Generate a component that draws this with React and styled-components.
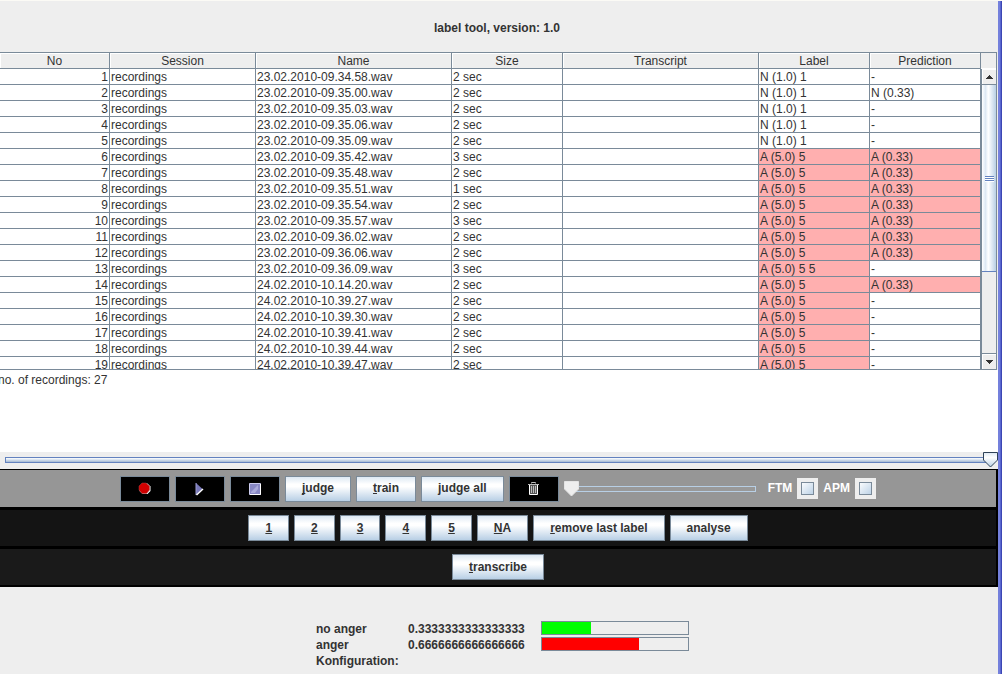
import React, { useState } from "react";
import styled, { createGlobalStyle } from "styled-components";

const Global = createGlobalStyle`
  *, *::before, *::after { box-sizing: border-box; }
  html, body { margin: 0; }
  body {
    background: #eeeeee;
    color: #333333;
    font: 12px/15px "Liberation Sans", Arial, sans-serif;
  }
  u { text-decoration-skip-ink: none; }
`;

const Window = styled.div`
  min-height: 100vh;
  overflow: hidden;
  padding-right: 4px;
  background: linear-gradient(
    to left,
    #3c46b4 0 1px,
    #5a67cf 1px 2px,
    #7480dc 2px 4px,
    #eeeeee 4px
  );
  border-top: 1px solid #fbfaf5;
`;

const Title = styled.h1`
  margin: 0;
  padding: 20px 4px 16px 0;
  height: 51px;
  font-size: 12px;
  line-height: 15px;
  text-align: center;
`;

const ScrollPane = styled.div`
  display: grid;
  grid-template-columns: minmax(0, 1fr) 16px;
  height: 318px;
  margin-right: 1px;
  border-top: 1px solid #7a8a99;
  border-bottom: 1px solid #7a8a99;
  overflow: hidden;
`;

const Viewport = styled.div`
  overflow: hidden;
  background: #ffffff;
`;

const Table = styled.table`
  width: 100%;
  table-layout: fixed;
  border-collapse: separate;
  border-spacing: 0;
`;

const Head = styled.th`
  height: 16px;
  padding: 2px 0 0;
  overflow: hidden;
  background: #eeeeee;
  border-right: 1px solid #7a8a99;
  border-bottom: 1px solid #7a8a99;
  box-shadow: inset 1px 1px #ffffff;
  font-weight: normal;
  line-height: 13px;
`;

const Cell = styled.td`
  height: 16px;
  padding: 2px 1px 0;
  overflow: hidden;
  background: ${(p) => (p.$angry ? "#ffafaf" : "#ffffff")};
  border-right: 1px solid #7a8a99;
  border-bottom: 1px solid #7a8a99;
  line-height: 13px;
  text-align: ${(p) => (p.$numeric ? "right" : "left")};
  white-space: nowrap;
`;

const ScrollColumn = styled.div`
  display: flex;
  flex-direction: column;
  background: #eeeeee;
  border-right: 1px solid #7a8a99;
`;

const Corner = styled.div`
  height: 16px;
  flex: none;
  border-bottom: 1px solid #ffffff;
`;

const ArrowButton = styled.button`
  display: grid;
  place-items: center;
  height: 16px;
  flex: none;
  padding: 0;
  background: #eeeeee;
  border: 0 solid #7a8a99;
  border-width: ${(p) => (p.$down ? "1px 0 0 1px" : "0 0 1px 1px")};
  box-shadow: inset 1px 1px #ffffff;
`;

const Track = styled.div`
  flex: 1;
  background: #eeeeee;
  border-left: 1px solid #7a8a99;
`;

const Thumb = styled.div`
  display: flex;
  flex-direction: column;
  justify-content: center;
  align-items: center;
  gap: 1px;
  height: 187px;
  background: linear-gradient(90deg, #ffffff 0%, #dde8f3 25%, #ffffff 45%, #b8cfe5 100%);
  border: 1px solid #6382bf;
  border-width: 0 0 1px 0;
`;

const Grip = styled.span`
  width: 9px;
  height: 1px;
  background: #6382bf;
  box-shadow: 0 1px #ffffff;
`;

const Notes = styled.div`
  height: 82px;
  padding-top: 3px;
  background: #ffffff;
`;

const NotesLine = styled.p`
  margin: 0 0 0 -2px;
`;

const Position = styled.div`
  height: 17px;
  margin-left: -2px;
`;

const SliderBox = styled.div`
  position: relative;
  display: flex;
  width: ${(p) => (p.$flat ? "199px" : "auto")};
  height: 16px;
`;

const Range = styled.input`
  appearance: none;
  flex: 1;
  min-width: 0;
  height: 16px;
  margin: 0 7px;
  background: transparent;

  &::-webkit-slider-runnable-track {
    height: 6px;
    background: ${(p) =>
      p.$flat ? "#999999" : "linear-gradient(#ffffff, #dbe5f1 40%, #a3b8d2)"};
    border: 1px solid ${(p) => (p.$flat ? "#b8cfe5" : "#6382bf")};
  }

  &::-webkit-slider-thumb {
    appearance: none;
    width: 1px;
    height: 4px;
    background: transparent;
  }
`;

const Knob = styled.svg`
  position: absolute;
  top: 0;
  pointer-events: none;
`;

const Panels = styled.div`
  border: solid #000000;
  border-width: 1px 2px 2px 0;
`;

const Toolbar = styled.div`
  display: flex;
  justify-content: center;
  align-items: center;
  gap: 5px;
  height: ${(p) => p.$height || "39px"};
  background: ${(p) => p.$tone};
  border-bottom: ${(p) => (p.$last ? "0" : "3px solid #000000")};
`;

const Button = styled.button`
  height: 26px;
  padding: 0 16px;
  background: linear-gradient(#dde8f3, #ffffff 30%, #ffffff 40%, #b8cfe5);
  border: 1px solid #7a8a99;
  color: #333333;
  font: bold 12px/15px "Liberation Sans", Arial, sans-serif;
  white-space: nowrap;
`;

const IconButton = styled.button`
  display: grid;
  place-items: center;
  width: 50px;
  height: 26px;
  padding: 0;
  background: #000000;
  border: 1px solid #7a8a99;
`;

const Option = styled.label`
  display: flex;
  align-items: center;
  gap: 5px;
  color: #ffffff;
  font-weight: bold;
`;

const Check = styled.input`
  appearance: none;
  width: 21px;
  height: 21px;
  margin: 0;
  border: 4px solid #eeeeee;
  outline: 1px solid #7a8a99;
  outline-offset: -5px;
  background: linear-gradient(135deg, #ffffff, #b8cfe5);
`;

const Results = styled.dl`
  display: grid;
  grid-template-columns: 87px 128px 148px;
  column-gap: 5px;
  justify-content: center;
  margin: 34px 0 0;
  padding-left: 7px;
  font-weight: bold;
  line-height: 16px;
`;

const ResultName = styled.dt`
  white-space: nowrap;
`;

const ResultValue = styled.dd`
  margin: 0;
`;

const Meter = styled.dd`
  height: 14px;
  margin: 0 0 2px;
  border: 1px solid #7a8a99;
`;

const Fill = styled.div`
  height: 100%;
  background: ${(p) => p.$color};
`;

const columns = [
  ["No", 110], ["Session", 146], ["Name", 196], ["Size", 111],
  ["Transcript", 196], ["Label", 111], ["Prediction", 111],
];

const names = [
  "23.02.2010-09.34.58", "23.02.2010-09.35.00", "23.02.2010-09.35.03",
  "23.02.2010-09.35.06", "23.02.2010-09.35.09", "23.02.2010-09.35.42",
  "23.02.2010-09.35.48", "23.02.2010-09.35.51", "23.02.2010-09.35.54",
  "23.02.2010-09.35.57", "23.02.2010-09.36.02", "23.02.2010-09.36.06",
  "23.02.2010-09.36.09", "24.02.2010-10.14.20", "24.02.2010-10.39.27",
  "24.02.2010-10.39.30", "24.02.2010-10.39.41", "24.02.2010-10.39.44",
  "24.02.2010-10.39.47",
];
const seconds = { 6: 3, 8: 1, 10: 3, 13: 3 };

const rows = names.map((name, i) => {
  const no = i + 1;
  const angry = no > 5;
  const predictedAngry = (no > 5 && no < 13) || no === 14;
  return {
    no,
    name: `${name}.wav`,
    size: `${seconds[no] || 2} sec`,
    label: no === 13 ? "A (5.0) 5 5" : angry ? "A (5.0) 5" : "N (1.0) 1",
    angry,
    prediction: no === 2 ? "N (0.33)" : predictedAngry ? "A (0.33)" : "-",
    predictedAngry,
  };
});

const results = [
  { name: "no anger", value: "0.3333333333333333", color: "#00ff00" },
  { name: "anger", value: "0.6666666666666666", color: "#ff0000" },
];

const Slider = ({ flat, initial, label }) => {
  const [value, setValue] = useState(initial);
  return (
    <SliderBox $flat={flat}>
      <Range
        $flat={flat}
        type="range"
        value={value}
        onChange={(e) => setValue(Number(e.target.value))}
        aria-label={label}
      />
      <Knob
        width="15"
        height="16"
        viewBox="0 0 15 16"
        style={{ left: `calc((100% - 15px) * ${value / 100})` }}
        aria-hidden="true"
      >
        <defs>
          <linearGradient id="knob" x1="0" y1="0" x2="0" y2="1">
            <stop offset="0" stopColor="#dde8f3" />
            <stop offset=".35" stopColor="#fff" />
            <stop offset="1" stopColor="#b8cfe5" />
          </linearGradient>
        </defs>
        <path
          d="M.5.5h14v7.500l-7 7-7-7z"
          fill={flat ? "#eeeeee" : "url(#knob)"}
          stroke={flat ? "#e4e4e4" : "#2f4258"}
        />
      </Knob>
    </SliderBox>
  );
};

const Arrow = ({ down }) => (
  <svg width="8" height="4" viewBox="0 0 8 4" shapeRendering="crispEdges" aria-hidden="true">
    <path d={down ? "M0 0h8L4 4z" : "M0 4h8L4 0z"} fill="#333" />
  </svg>
);

const RecordIcon = () => (
  <svg width="13" height="13" viewBox="0 0 13 13" aria-hidden="true">
    <path d="M4.500 1.500h5l3 3v4.500l-3 3h-5l-3-3V4.500z" fill="#fff" />
    <path d="M4 1h4l3.500 3v4l-3 3.500H4L1 8V4z" fill="#d00000" stroke="#a04040" strokeWidth=".5" />
  </svg>
);

const PlayIcon = () => (
  <svg width="9" height="14" viewBox="0 0 9 14" aria-hidden="true">
    <path d="M1 1v12l6.500-6z" fill="#7777b8" />
    <path d="M1 1v12" stroke="#9999cc" />
    <path d="M1.500 13l6.500-6" stroke="#fff" strokeWidth="1.500" />
  </svg>
);

const StopIcon = () => (
  <svg width="12" height="12" viewBox="0 0 12 12" aria-hidden="true">
    <path d="M.5.5h11v11H.5z" fill="#8888c4" stroke="#ccccee" />
    <path d="M2 9l7-7v4L6 10H2z" fill="#aaaadb" />
    <path d="M1 11.500h10.500V1" fill="none" stroke="#fff" />
  </svg>
);

const TrashIcon = () => (
  <svg width="13" height="15" viewBox="0 0 13 15" fill="none" aria-hidden="true">
    <path d="M2.500 4h8v9.500h-8z" fill="#555" />
    <path d="M1 3.500h11M4.500 2.500v-1h4v1" stroke="#bbb" />
    <path d="M2.500 4v9.500h8V4" stroke="#fff" />
    <path d="M4.500 5v7M6.500 5v7M8.500 5v7" stroke="#bbb" />
  </svg>
);

export default function App() {
  return (
    <>
      <Global />
      <Window>
        <Title>label tool, version: 1.0</Title>
        <ScrollPane>
          <Viewport>
            <Table>
              <colgroup>
                {columns.map(([name, width]) => (
                  <col key={name} style={{ width: `${(width / 981) * 100}%` }} />
                ))}
              </colgroup>
              <thead>
                <tr>{columns.map(([name]) => <Head key={name} scope="col">{name}</Head>)}</tr>
              </thead>
              <tbody>
                {rows.map((r) => (
                  <tr key={r.no}>
                    <Cell $numeric>{r.no}</Cell>
                    <Cell>recordings</Cell>
                    <Cell>{r.name}</Cell>
                    <Cell>{r.size}</Cell>
                    <Cell />
                    <Cell $angry={r.angry}>{r.label}</Cell>
                    <Cell $angry={r.predictedAngry}>{r.prediction}</Cell>
                  </tr>
                ))}
              </tbody>
            </Table>
          </Viewport>
          <ScrollColumn>
            <Corner />
            <ArrowButton aria-label="Scroll up"><Arrow /></ArrowButton>
            <Track>
              <Thumb><Grip /><Grip /><Grip /></Thumb>
            </Track>
            <ArrowButton $down aria-label="Scroll down"><Arrow down /></ArrowButton>
          </ScrollColumn>
        </ScrollPane>
        <Notes>
          <NotesLine>no. of recordings: 27</NotesLine>
        </Notes>
        <Position>
          <Slider initial={100} label="Position" />
        </Position>
        <Panels>
          <Toolbar $tone="#969696" $height="40px">
            <IconButton aria-label="Record"><RecordIcon /></IconButton>
            <IconButton aria-label="Play"><PlayIcon /></IconButton>
            <IconButton aria-label="Stop"><StopIcon /></IconButton>
            <Button><u>j</u>udge</Button>
            <Button><u>t</u>rain</Button>
            <Button>judge all</Button>
            <IconButton aria-label="Delete"><TrashIcon /></IconButton>
            <Slider flat initial={0} label="Level" />
            <Option>FTM <Check type="checkbox" /></Option>
            <Option>APM <Check type="checkbox" /></Option>
          </Toolbar>
          <Toolbar $tone="#141414">
            {["1", "2", "3", "4", "5"].map((n) => <Button key={n}><u>{n}</u></Button>)}
            <Button><u>N</u>A</Button>
            <Button><u>r</u>emove last label</Button>
            <Button>analyse</Button>
          </Toolbar>
          <Toolbar $tone="#1a1a1a" $height="36px" $last>
            <Button><u>t</u>ranscribe</Button>
          </Toolbar>
        </Panels>
        <Results>
          {results.map((r) => (
            <React.Fragment key={r.name}>
              <ResultName>{r.name}</ResultName>
              <ResultValue>{r.value}</ResultValue>
              <Meter>
                <Fill $color={r.color} style={{ width: `${Number(r.value) * 100}%` }} />
              </Meter>
            </React.Fragment>
          ))}
          <ResultName>Konfiguration:</ResultName>
        </Results>
      </Window>
    </>
  );
}
